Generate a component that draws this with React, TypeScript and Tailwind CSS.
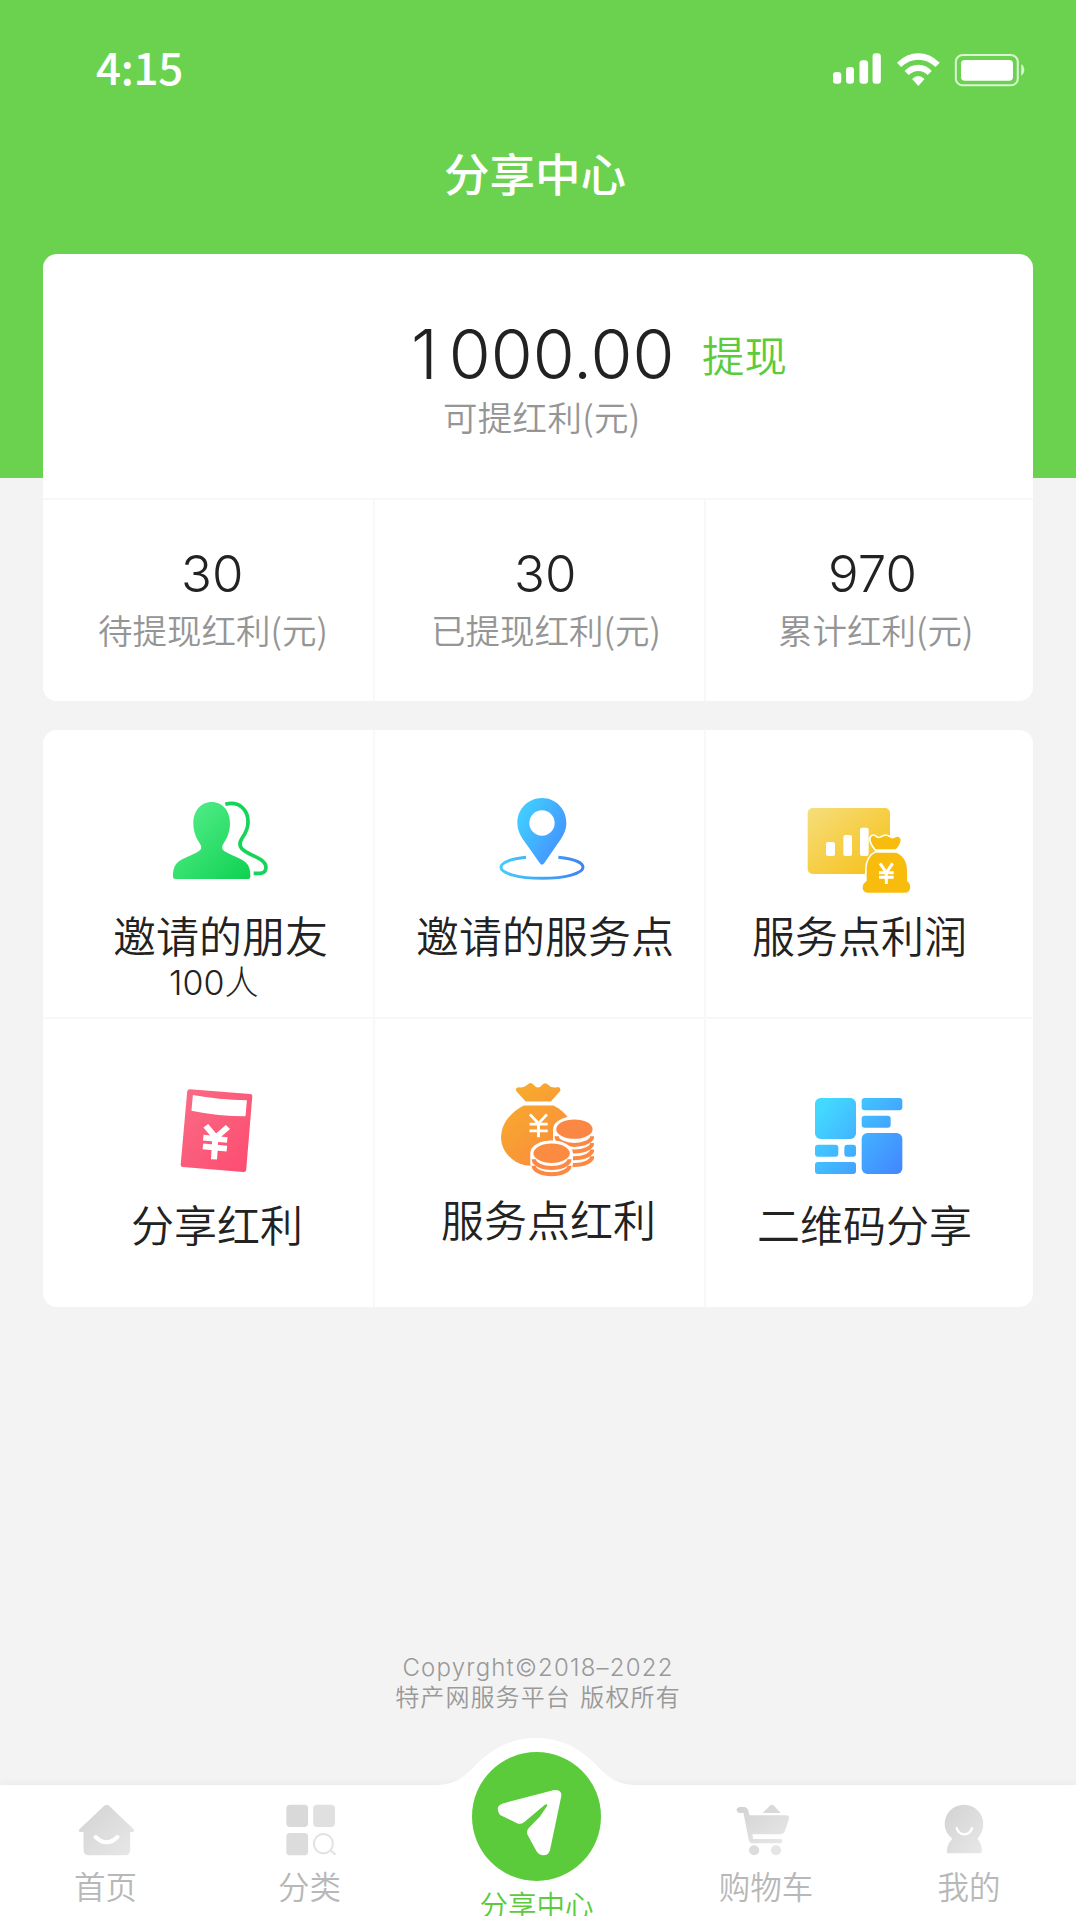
import type { ReactNode } from 'react'

function StatusIcons() {
  return (
    <svg className="h-[35px] w-[192px]" viewBox="861 155 558 105" preserveAspectRatio="none" fill="#fff">
      <rect x="861" y="215" width="24" height="35" rx="9" />
      <rect x="899" y="200" width="23" height="50" rx="9" />
      <rect x="938" y="180" width="25" height="70" rx="9" />
      <rect x="976" y="159" width="24" height="91" rx="9" />
      <path d="M1047 187Q1075 159 1109 159T1171 187L1159 200Q1136 178 1109 178T1059 200Z" />
      <path d="M1069 212Q1086 193 1109 193T1148 212L1136 224Q1124 212 1109 212T1081 224Z" />
      <path d="M1091 236Q1109 218 1127 236L1109 257Z" />
      <rect x="1218" y="164" width="180" height="91" rx="20" fill="none" stroke="#fff" strokeOpacity=".75" strokeWidth="6" />
      <rect x="1233" y="179" width="151" height="62" rx="11" />
      <path d="M1408 192Q1417 198 1417 209T1408 226Z" opacity=".75" />
    </svg>
  )
}

function FriendsIcon() {
  return (
    <svg className="h-[80px] w-[97px]" viewBox="278 94 291 240">
      <defs>
        <linearGradient id="friends" x1="0" y1="0" x2="1" y2="1">
          <stop offset="0" stopColor="#5cf08f" />
          <stop offset="1" stopColor="#0dd150" />
        </linearGradient>
      </defs>
      <path
        fill="url(#friends)"
        d="M397 97C430 97 452 124 452 161C452 184 445 203 434 219C424 234 428 240 440 247C456 257 480 264 495 275C510 287 513 300 513 321Q513 328 506 328H288Q281 328 281 321C281 300 284 287 299 275C314 264 338 257 354 247C366 240 370 234 360 219C349 203 342 184 342 161C342 124 364 97 397 97Z"
      />
      <path
        fill="none"
        stroke="#16d457"
        strokeWidth="11"
        d="M438 104C478 92 507 120 506 158C506 181 497 193 488 206C478 221 481 233 493 242C510 255 530 260 545 270C568 286 562 311 541 311H523"
      />
    </svg>
  )
}

function LocationIcon() {
  return (
    <svg className="h-[84px] w-[86px]" viewBox="326 80 258 252">
      <defs>
        <linearGradient id="pin" x1="0" y1="0" x2="1" y2=".7">
          <stop offset="0" stopColor="#41d8ff" />
          <stop offset="1" stopColor="#4490ff" />
        </linearGradient>
        <linearGradient id="ring" x1="0" y1="0" x2="1" y2="0">
          <stop offset="0" stopColor="#42ccfb" />
          <stop offset="1" stopColor="#3f83f4" />
        </linearGradient>
      </defs>
      <path
        fill="url(#pin)"
        fillRule="evenodd"
        d="M455 83C496 83 528 116 528 157C528 180 518 197 507 213L462 278Q455 288 448 278L402 213C391 197 381 180 381 157C381 116 414 83 455 83ZM455 120A38 38 0 1 0 455 196A38 38 0 1 0 455 120Z"
      />
      <path fill="none" stroke="url(#ring)" strokeWidth="9" d="M407 261C360 266 332 277 332 291C332 309 385 324 455 324C525 324 578 309 578 291C578 277 552 266 504 261" />
    </svg>
  )
}

function ProfitIcon() {
  return (
    <svg className="h-[87px] w-[104px]" viewBox="232 110 312 261">
      <defs>
        <linearGradient id="board" x1="0" y1="0" x2="1" y2="1">
          <stop offset="0" stopColor="#f7de7c" />
          <stop offset="1" stopColor="#f5bf13" />
        </linearGradient>
      </defs>
      <rect x="234" y="113" width="247" height="198" rx="15" fill="url(#board)" />
      <g fill="#fff">
        <rect x="289" y="215" width="27" height="42" rx="6" />
        <rect x="341" y="194" width="26" height="63" rx="6" />
        <rect x="391" y="172" width="26" height="85" rx="6" />
      </g>
      <g fill="#f8bd0c" stroke="#fff" strokeWidth="10" strokeLinejoin="round" paintOrder="stroke">
        <path d="M438 237Q422 216 423 205Q426 192 437 199Q446 208 456 201Q468 193 479 201Q490 208 499 200Q510 196 513 209Q510 228 497 237Z" />
        <path d="M438 247H500C524 258 532 278 532 301V331C548 343 543 367 527 367H414C396 367 393 343 411 332V301C411 275 418 256 438 247Z" />
      </g>
      <path stroke="#fff" strokeWidth="9" fill="none" d="M451 279L470 307L489 279M448 307H492M448 321H492M470 304V341" />
    </svg>
  )
}

function BonusBookIcon() {
  return (
    <svg className="h-[84px] w-[73px]" viewBox="282 86 204 252" preserveAspectRatio="none">
      <defs>
        <linearGradient id="book" x1="0" y1="0" x2="1" y2="1">
          <stop offset="0" stopColor="#fa6c85" />
          <stop offset="1" stopColor="#fd4b70" />
        </linearGradient>
      </defs>
      <path fill="url(#book)" d="M310 87L478 101Q485 102 484 109L467 328Q466 336 459 335L290 320Q283 319 284 312L302 94Q303 87 310 87Z" />
      <path fill="#fff" d="M318 104Q390 118 469 120L465 168Q390 168 314 151Z" />
      <path stroke="#fff" strokeWidth="17" fill="none" d="M354 196L382 232L416 200M347 232L414 239M346 258L413 265M381 230L377 297" />
    </svg>
  )
}

function MoneyBagIcon() {
  return (
    <svg className="h-[95px] w-[94px]" viewBox="1175 66 264 284" preserveAspectRatio="none">
      <defs>
        <linearGradient id="bag" gradientUnits="userSpaceOnUse" x1="1180" y1="90" x2="1400" y2="320">
          <stop offset="0" stopColor="#f7ae2c" />
          <stop offset="1" stopColor="#fb8540" />
        </linearGradient>
      </defs>
      <path
        fill="url(#bag)"
        d="M1247 124L1221 94Q1217 83 1228 82Q1242 84 1252 74Q1261 64 1270 75Q1282 90 1293 75Q1302 65 1311 75Q1321 86 1337 81Q1347 82 1344 93L1318 124Z"
      />
      <path fill="url(#bag)" d="M1242 136H1325C1385 168 1395 230 1368 270L1290 312Q1265 319 1245 315C1205 305 1178 270 1178 232C1178 190 1206 155 1242 136Z" />
      <path stroke="#fff" strokeWidth="8" fill="none" d="M1259 163L1283 190L1307 163M1258 192H1309M1258 212H1309M1283 188V231" />
      <path fill="#fff" stroke="#fff" strokeWidth="18" d="M1333 207A51 29 0 0 1 1435 207V290A51 29 0 0 1 1333 290Z" />
      <g fill="none" stroke="#fc8943" strokeWidth="12">
        <path d="M1334 228A50 26 0 0 0 1434 228" />
        <path d="M1334 248A50 26 0 0 0 1434 248" />
        <path d="M1334 268A50 26 0 0 0 1434 268" />
        <path d="M1334 288A50 26 0 0 0 1434 288" />
      </g>
      <ellipse cx="1384" cy="207" rx="52" ry="35" fill="#fff" />
      <ellipse cx="1384" cy="207" rx="51" ry="29" fill="#fb8744" />
      <path fill="#fff" stroke="#fff" strokeWidth="18" d="M1269 279A51 29 0 0 1 1371 279V310A51 29 0 0 1 1269 310Z" />
      <g fill="none" stroke="#fb8943" strokeWidth="12">
        <path d="M1270 297A50 26 0 0 0 1370 297" />
        <path d="M1270 316A50 26 0 0 0 1370 316" />
      </g>
      <ellipse cx="1320" cy="279" rx="52" ry="34" fill="#fff" />
      <ellipse cx="1320" cy="279" rx="51" ry="29" fill="#fa8b41" />
    </svg>
  )
}

function QrShareIcon() {
  return (
    <svg className="h-[78px] w-[90px]" viewBox="282 111 270 234">
      <defs>
        <linearGradient id="qr" gradientUnits="userSpaceOnUse" x1="285" y1="120" x2="545" y2="340">
          <stop offset=".1" stopColor="#42d8ff" />
          <stop offset="1" stopColor="#4385ff" />
        </linearGradient>
      </defs>
      <g fill="url(#qr)">
        <rect x="285" y="114" width="123" height="123" rx="17" />
        <rect x="425" y="114" width="122" height="37" rx="9" />
        <rect x="425" y="167" width="87" height="36" rx="9" />
        <rect x="285" y="254" width="70" height="36" rx="9" />
        <rect x="373" y="254" width="35" height="36" rx="9" />
        <rect x="285" y="306" width="123" height="36" rx="9" />
        <rect x="425" y="219" width="122" height="123" rx="17" />
      </g>
    </svg>
  )
}

function GreyFade({ id }: { id: string }) {
  return (
    <defs>
      <linearGradient id={id} x1="0" y1="0" x2="1" y2="1">
        <stop offset="0" stopColor="#d2d2d2" />
        <stop offset="1" stopColor="#e8e8e8" />
      </linearGradient>
    </defs>
  )
}

function HomeIcon() {
  return (
    <svg className="h-[52px] w-[57px]" viewBox="228 491 165 156" preserveAspectRatio="none">
      <GreyFade id="home" />
      <path fill="url(#home)" d="M304 496Q311 490 318 496L389 567Q393 575 384 575H379V630Q379 645 364 645H259Q244 645 244 630V575H236Q228 574 232 567Z" />
      <path fill="none" stroke="#fff" strokeWidth="12" strokeLinecap="round" d="M279 590Q311 622 342 590" />
    </svg>
  )
}

function CategoryIcon() {
  return (
    <svg className="h-[52px] w-[51px]" viewBox="832 493 150 156" preserveAspectRatio="none">
      <g fill="#d9d9d9">
        <rect x="833" y="495" width="64" height="67" rx="11" />
        <rect x="912" y="495" width="64" height="67" rx="11" fill="#e0e0e0" />
        <rect x="833" y="580" width="64" height="67" rx="11" fill="#dcdcdc" />
      </g>
      <ellipse cx="942" cy="612" rx="28" ry="29" fill="none" stroke="#e3e3e3" strokeWidth="6" />
      <path d="M962 631L977 645" stroke="#e3e3e3" strokeWidth="7" />
    </svg>
  )
}

function CartIcon() {
  return (
    <svg className="h-[52px] w-[54px]" viewBox="580 498 158 156" preserveAspectRatio="none">
      <GreyFade id="cart" />
      <path fill="url(#cart)" d="M592 507H605Q613 508 616 517L619 532H729Q737 533 735 542L723 580Q720 588 711 589H628L630 603H710Q716 604 716 610Q716 615 710 616H627Q619 615 617 605L602 525H592Q582 524 582 516Q582 508 592 507Z" />
      <path fill="#d9d9d9" d="M679 503Q685 498 691 503L711 525H658Z" />
      <ellipse cx="633" cy="637" rx="15" ry="15" fill="#dcdcdc" />
      <ellipse cx="697" cy="637" rx="15" ry="15" fill="#e5e5e5" />
    </svg>
  )
}

function ProfileIcon() {
  return (
    <svg className="h-[50px] w-[40px]" viewBox="1184 493 116 150" preserveAspectRatio="none">
      <GreyFade id="profile" />
      <path fill="url(#profile)" d="M1242 495C1274 495 1298 521 1298 553C1298 570 1291 585 1281 597C1290 608 1294 621 1294 636Q1293 641 1288 641H1197Q1192 641 1192 636C1192 621 1198 608 1208 597C1194 585 1186 570 1186 553C1186 521 1210 495 1242 495Z" />
      <path fill="none" stroke="#fff" strokeWidth="7" d="M1220 563Q1225 584 1243 584T1266 563" />
    </svg>
  )
}

function SendIcon() {
  return (
    <svg className="h-[68px] w-[65px]" viewBox="-113 449 190 204" preserveAspectRatio="none" fill="#fff">
      <path d="M-98 493L12 463L54 452Q77 451 75 470L42 632Q38 649 21 648Q7 646 1 633L-23 588Q-29 576 -20 566L12 532L34 499Q34 492 27 496L-34 549Q-44 557 -56 551L-104 527Q-120 502 -98 493Z" />
    </svg>
  )
}

type Stat = { value: string; label: string; valueClass: string; labelClass: string }

const stats: Stat[] = [
  { value: '30', label: '待提现红利(元)', valueClass: 'ml-[138px]', labelClass: 'ml-[55px]' },
  { value: '30', label: '已提现红利(元)', valueClass: 'ml-[139px]', labelClass: 'ml-[56px]' },
  { value: '970', label: '累计红利(元)', valueClass: 'ml-[122px]', labelClass: 'ml-[72px]' },
]

type Entry = { icon: ReactNode; label: string; note?: string; iconClass: string; labelClass: string }

const entries: Entry[] = [
  { icon: <FriendsIcon />, label: '邀请的朋友', note: '100人', iconClass: 'ml-[129px] mt-[71px] h-[111px]', labelClass: 'ml-[70px]' },
  { icon: <LocationIcon />, label: '邀请的服务点', iconClass: 'ml-[124px] mt-[67px] h-[115px]', labelClass: 'ml-[41px]' },
  { icon: <ProfitIcon />, label: '服务点利润', iconClass: 'ml-[101px] mt-[77px] h-[105px]', labelClass: 'ml-[46px]' },
  { icon: <BonusBookIcon />, label: '分享红利', iconClass: 'ml-[137px] mt-[70px] h-[112px]', labelClass: 'ml-[88px]' },
  { icon: <MoneyBagIcon />, label: '服务点红利', iconClass: 'ml-[125px] mt-[63px] h-[114px]', labelClass: 'ml-[66px]' },
  { icon: <QrShareIcon />, label: '二维码分享', iconClass: 'ml-[108px] mt-[78px] h-[104px]', labelClass: 'ml-[51px]' },
]

type NavItemProps = { icon: ReactNode; label: string; className: string; iconClass: string }

function NavItem({ icon, label, className, iconClass }: NavItemProps) {
  return (
    <div className={`flex flex-col items-center ${className}`}>
      <div className={`mt-[19px] flex h-[60px] items-start ${iconClass}`}>{icon}</div>
      <span className="text-[31.5px] leading-[42px] text-[#b8b8b8]">{label}</span>
    </div>
  )
}

export default function App() {
  return (
    <div className="flex h-[1916px] w-[1076px] flex-col overflow-hidden bg-[linear-gradient(#6bd250_478px,#f3f3f3_478px)] font-['Noto_Sans_CJK_SC',sans-serif] font-[350] whitespace-nowrap text-[#222]">
      <header className="h-[254px] text-white">
        <div className="flex h-[124px] items-center justify-between pr-[51px] pl-[96px]">
          <span className="mt-[8px] text-[44px] leading-[50px] font-medium tracking-[-0.3px]">4:15</span>
          <div className="mt-[14px]">
            <StatusIcons />
          </div>
        </div>
        <h1 className="pt-[18px] text-center text-[45.5px] leading-[60px] font-medium">
          <span className="mr-[6px]">分享中心</span>
        </h1>
      </header>

      <section className="mx-[43px] h-[447px] w-[990px] overflow-hidden rounded-[14px] bg-white">
        <div className="h-[246px] border-b-2 border-[#f7f7f7] pt-[64px]">
          <div className="ml-[368px] flex h-[72px] items-center">
            <span className="w-[263px] font-['Inter'] text-[68px] leading-[72px] font-light">
              <span className="tracking-[11px]">1</span>000.00
            </span>
            <a className="ml-[28px] text-[42.5px] leading-[60px] text-[#5bcb3c]">提现</a>
          </div>
          <p className="ml-[400px] pt-[1px] text-[34.5px] leading-[50px] tracking-[0.3px] text-[#959595]">可提红利(元)</p>
        </div>
        <div className="grid h-[201px] grid-cols-[332px_331px_327px]">
          {stats.map((s) => (
            <div key={s.label} className="border-r-2 border-[#f8f8f8] pt-[44px] last:border-r-0">
              <p className={`font-['Inter'] text-[51px] leading-[60px] font-light ${s.valueClass}`}>{s.value}</p>
              <p className={`text-[34.5px] leading-[50px] text-[#959595] ${s.labelClass}`}>{s.label}</p>
            </div>
          ))}
        </div>
      </section>

      <section className="mx-[43px] mt-[29px] grid h-[577px] w-[990px] grid-cols-[332px_331px_327px] grid-rows-[289px_288px] overflow-hidden rounded-[14px] bg-white">
        {entries.map((e, i) => (
          <div
            key={e.label}
            className={`border-[#f8f8f8] ${i % 3 < 2 ? 'border-r-2' : ''} ${i < 3 ? 'border-b-2' : ''}`}
          >
            <div className={e.iconClass}>{e.icon}</div>
            <p className={`text-[43px] leading-[44px] ${e.labelClass}`}>{e.label}</p>
            {e.note && (
              <p className="ml-[126px] pt-[2px] font-['Inter','Noto_Sans_CJK_SC'] text-[34px] leading-[50px] font-light">
                {e.note}
              </p>
            )}
          </div>
        ))}
      </section>

      <footer className="mt-[347px] text-center text-[#999]">
        <p className="font-['Inter'] text-[24px] leading-[28px] font-[350] tracking-[1.2px]">Copyrght©2018–2022</p>
        <p className="text-[24px] leading-[28px] tracking-[1.1px] [word-spacing:3px]">特产网服务平台 版权所有</p>
      </footer>

      <nav className="relative mt-auto flex h-[131px] shrink-0 bg-white shadow-[0_-2px_8px_rgba(0,0,0,0.04)]">
        <svg className="absolute -top-[47px] left-[434px] h-[48px] w-[204px]" viewBox="0 0 204 48" fill="#fff">
          <path d="M0 48V47C20 47 29 40 39 30C57 10 77 0 102 0S147 10 165 30C175 40 184 47 204 47V48Z" />
        </svg>
        <NavItem icon={<HomeIcon />} label="首页" className="w-[211px]" iconClass="ml-[2px]" />
        <NavItem icon={<CategoryIcon />} label="分类" className="w-[197px]" iconClass="ml-[4px]" />
        <div className="relative -mt-[33px] flex w-[257px] flex-col items-center">
          <div className="flex size-[129px] shrink-0 items-center justify-center rounded-full bg-[#5bcb3c] pt-[13px] pr-[14px]">
            <SendIcon />
          </div>
          <span className="mt-[6px] text-[28.5px] leading-[34px] text-[#5bcb3c]">分享中心</span>
        </div>
        <NavItem icon={<CartIcon />} label="购物车" className="w-[202px]" iconClass="mr-[7px]" />
        <NavItem icon={<ProfileIcon />} label="我的" className="w-[204px]" iconClass="mr-[11px]" />
      </nav>
    </div>
  )
}
